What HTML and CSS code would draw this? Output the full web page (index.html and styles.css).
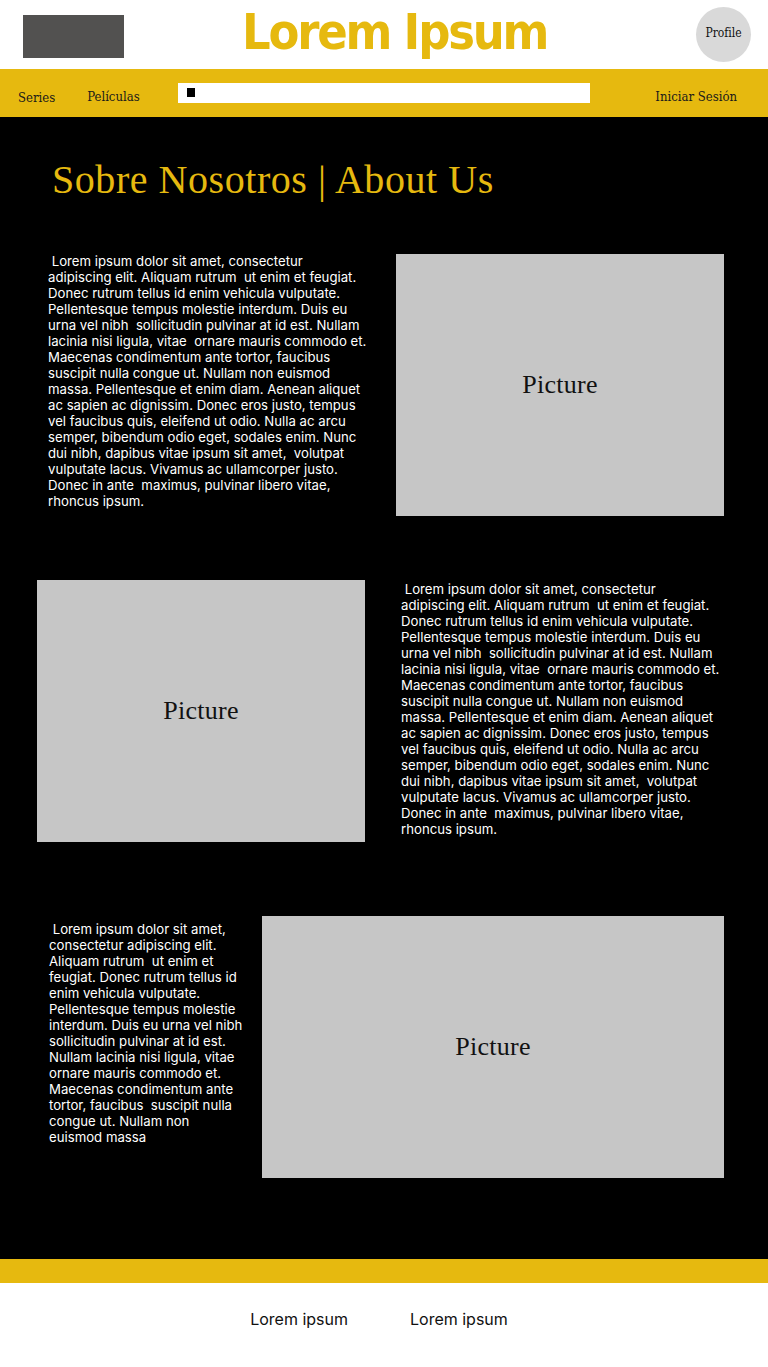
FILE: index.html
```html
<!DOCTYPE html>
<html lang="es">
<head>
<meta charset="utf-8">
<title>Lorem Ipsum</title>
<link rel="stylesheet" href="styles.css">
</head>
<body>
<header class="top">
  <div class="logo"></div>
  <h1 class="brand">Lorem Ipsum</h1>
  <div class="profile">Profile</div>
</header>
<nav class="nav">
  <a class="nav-link series">Series</a>
  <a class="nav-link movies">Películas</a>
  <div class="search"><span class="cursor"></span></div>
  <a class="nav-link login">Iniciar Sesión</a>
</nav>
<main class="main">
  <h2 class="title">Sobre Nosotros | About Us</h2>
  <section class="row row1">
    <p class="text t1">&nbsp;Lorem ipsum dolor sit amet, consectetur adipiscing elit. Aliquam rutrum &nbsp;ut enim et feugiat. Donec rutrum tellus id enim vehicula vulputate. Pellentesque tempus molestie interdum. Duis eu urna vel nibh &nbsp;sollicitudin pulvinar at id est. Nullam lacinia nisi ligula, vitae &nbsp;ornare mauris commodo et. Maecenas condimentum ante tortor, faucibus suscipit nulla congue ut. Nullam non euismod massa. Pellentesque et enim diam. Aenean aliquet ac sapien ac dignissim. Donec eros justo, tempus vel faucibus quis, eleifend ut odio. Nulla ac arcu semper, bibendum odio eget, sodales enim. Nunc dui nibh, dapibus vitae ipsum sit amet, &nbsp;volutpat vulputate lacus. Vivamus ac ullamcorper justo. Donec in ante &nbsp;maximus, pulvinar libero vitae, rhoncus ipsum.</p>
    <div class="pic p1">Picture</div>
  </section>
  <section class="row row2">
    <div class="pic p2">Picture</div>
    <p class="text t2">&nbsp;Lorem ipsum dolor sit amet, consectetur adipiscing elit. Aliquam rutrum &nbsp;ut enim et feugiat. Donec rutrum tellus id enim vehicula vulputate. Pellentesque tempus molestie interdum. Duis eu urna vel nibh &nbsp;sollicitudin pulvinar at id est. Nullam lacinia nisi ligula, vitae &nbsp;ornare mauris commodo et. Maecenas condimentum ante tortor, faucibus suscipit nulla congue ut. Nullam non euismod massa. Pellentesque et enim diam. Aenean aliquet ac sapien ac dignissim. Donec eros justo, tempus vel faucibus quis, eleifend ut odio. Nulla ac arcu semper, bibendum odio eget, sodales enim. Nunc dui nibh, dapibus vitae ipsum sit amet, &nbsp;volutpat vulputate lacus. Vivamus ac ullamcorper justo. Donec in ante &nbsp;maximus, pulvinar libero vitae, rhoncus ipsum.</p>
  </section>
  <section class="row row3">
    <p class="text t3">&nbsp;Lorem ipsum dolor sit amet, consectetur adipiscing elit. Aliquam rutrum &nbsp;ut enim et feugiat. Donec rutrum tellus id enim vehicula vulputate. Pellentesque tempus molestie interdum. Duis eu urna vel nibh sollicitudin pulvinar at id est. Nullam lacinia nisi ligula, vitae ornare mauris commodo et. Maecenas condimentum ante tortor, faucibus &nbsp;suscipit nulla congue ut. Nullam non euismod massa</p>
    <div class="pic p3">Picture</div>
  </section>
</main>
<div class="band"></div>
<footer class="foot">
  <a class="foot-link">Lorem ipsum</a>
  <a class="foot-link">Lorem ipsum</a>
</footer>
</body>
</html>
```
FILE: styles.css
```css
* { box-sizing: border-box; }
html, body { margin: 0; padding: 0; }
body { background: #fff; width: 768px; font-family: Inter, "Liberation Sans", sans-serif; }

.top {
  height: 69px;
  display: flex;
  align-items: center;
  background: #fff;
}
.logo {
  width: 101px; height: 43px;
  background: #525150;
  margin-left: 23px;
  align-self: flex-start;
  margin-top: 15px;
}
.brand {
  margin: -6px 0 0 118px;
  font-family: "DejaVu Sans", sans-serif;
  font-stretch: condensed;
  font-weight: 700;
  font-size: 50px;
  color: #e6b90f;
  line-height: 1;
  letter-spacing: -2.2px;
}
.profile {
  margin-left: auto;
  margin-right: 17px;
  width: 55px; height: 55px;
  border-radius: 50%;
  background: #d9d9d9;
  display: flex; align-items: center; justify-content: center;
  font-family: "DejaVu Serif", serif;
  font-stretch: condensed;
  font-size: 12px;
  color: #111;
  padding-bottom: 4px;
}

.nav {
  height: 48px;
  background: #e6b90f;
  display: flex;
  align-items: center;
  font-family: "DejaVu Serif", serif;
  font-stretch: condensed;
  font-size: 13px;
  color: #1a1a1a;
}
.nav-link { color: #1a1a1a; text-decoration: none; }
.series { margin-left: 18px; margin-top: 9px; }
.movies { margin-left: 32px; margin-top: 7px; }
.search {
  margin-left: 38px;
  width: 412px; height: 20px;
  background: #fff;
  display: flex; align-items: center;
  padding-left: 9px;
}
.cursor { width: 8px; height: 9px; background: #000; margin-top: -2px; }
.login { margin-left: auto; margin-right: 31px; margin-top: 6px; }

.main {
  background: #000;
  padding: 40px 0 81px;
}
.title {
  margin: 0 0 51px 52px;
  font-family: "Liberation Serif", serif;
  font-weight: 400;
  font-size: 40px;
  color: #e6b90f;
  line-height: 46px;
  letter-spacing: 0.55px;
}
.row { display: flex; align-items: flex-start; }
.text {
  margin: 0;
  color: #fff;
  font-family: Inter, "Liberation Sans", sans-serif;
  font-size: 13.2px;
  line-height: 16px;
}
.pic {
  height: 262px;
  background: #c6c6c6;
  display: flex; align-items: center; justify-content: center;
  font-family: "Liberation Serif", serif;
  font-size: 26px;
  color: #111;
  letter-spacing: 0.3px;
}
.row1 .t1 { margin-left: 48px; width: 322px; margin-top: -1px; }
.p1 { width: 328px; margin-left: 26px; }
.row2 { margin-top: 64px; }
.p2 { width: 328px; margin-left: 37px; }
.row2 .t2 { margin-left: 36px; width: 322px; margin-top: 1px; }
.row3 { margin-top: 74px; }
.row3 .t3 { margin-left: 49px; width: 196px; margin-top: 5px; }
.p3 { width: 462px; margin-left: 17px; }

.band { height: 24px; background: #e6b90f; }
.foot {
  height: 84px;
  display: flex;
  justify-content: center;
  align-items: center;
  gap: 62px;
  padding-right: 10px;
  padding-bottom: 12px;
}
.foot-link {
  font-family: Inter, "Liberation Sans", sans-serif;
  font-size: 16px;
  color: #111;
}
```
